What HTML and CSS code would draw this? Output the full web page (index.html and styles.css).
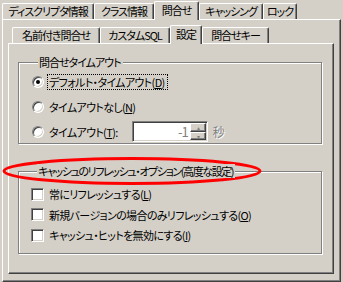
FILE: index.html
```html
<!DOCTYPE html>
<html lang="ja">
<head>
    <meta charset="UTF-8">
    <meta name="viewport" content="width=device-width, initial-scale=1.0">
    <title>問合せ設定</title>
    <link rel="stylesheet" href="styles.css">
</head>
<body>
    <div id="dlg">
        <div class="tabs">
            <span class="tab w92">ディスクリプタ情報</span>
            <span class="tab w60">クラス情報</span>
            <span class="tab sel w45">問合せ</span>
            <span class="tab w64">キャッシング</span>
            <span class="tab w34">ロック</span>
        </div>
        <div class="panel outer">
            <div class="tabs">
                <span class="tab w88">名前付き問合せ</span>
                <span class="tab w70">カスタムSQL</span>
                <span class="tab sel w32">設定</span>
                <span class="tab w67">問合せキー</span>
            </div>
            <div class="panel inner">
                <fieldset class="group g1">
                    <legend>問合せタイムアウト</legend>
                    <div class="row">
                        <span class="radio on"></span>
                        <span class="lbl focus">デフォルト・タイムアウト(<u>D</u>)</span>
                    </div>
                    <div class="row">
                        <span class="radio"></span>
                        <span class="lbl">タイムアウトなし(<u>N</u>)</span>
                    </div>
                    <div class="row">
                        <span class="radio"></span>
                        <span class="lbl">タイムアウト(<u>T</u>):</span>
                        <div class="spin">
                            <span class="field">-1</span>
                            <span class="btns">
                                <span class="sbtn">&#9652;</span>
                                <span class="sbtn">&#9662;</span>
                            </span>
                        </div>
                        <span class="lbl off">秒</span>
                    </div>
                </fieldset>
                <fieldset class="group g2">
                    <legend class="tight">キャッシュのリフレッシュ・オプション(高度な設定)</legend>
                    <div class="row chk">
                        <span class="box"></span>
                        <span class="lbl">常にリフレッシュする(<u>L</u>)</span>
                    </div>
                    <div class="row chk">
                        <span class="box"></span>
                        <span class="lbl">新規バージョンの場合のみリフレッシュする(<u>O</u>)</span>
                    </div>
                    <div class="row chk">
                        <span class="box"></span>
                        <span class="lbl">キャッシュ・ヒットを無効にする(<u>I</u>)</span>
                    </div>
                </fieldset>
            </div>
        </div>
        <!-- red mark drawn over the second group title -->
        <svg class="mark" width="262" height="30" viewBox="0 0 262 30">
            <ellipse cx="131" cy="15" rx="128" ry="12.5" fill="none" stroke="#ff0000" stroke-width="3"/>
        </svg>
    </div>
</body>
</html>
```

FILE: styles.css
```css
*{
    box-sizing: border-box;
    margin: 0px;
    padding: 0px;
}
body{
    background-color: #d4d0c8;
    font-family: "Noto Sans CJK JP", "Noto Sans", sans-serif;
    font-size: 11px;
    line-height: 14px;
    color: #000;
}
#dlg, legend, .lbl, .tab{
    font-feature-settings: "palt";
    letter-spacing: -1px;
}
#dlg{
    position: relative;
    width: 343px;
    height: 282px;
}
.tabs{
    display: flex;
    align-items: flex-end;
    height: 19px;
    padding-left: 2px;
}
.tab{
    position: relative;
    height: 16px;
    padding-top: 1px;
    border-top: 1px solid #fff;
    border-left: 1px solid #fff;
    border-right: 1px solid #404040;
    border-radius: 2px 2px 0px 0px;
    box-shadow: inset -1px 0px #808080;
    white-space: nowrap;
    line-height: 13px;
    text-align: center;
}
.tab.sel{
    height: 19px;
    margin-bottom: -1px;
    padding-top: 2px;
    background-color: #d4d0c8;
    z-index: 2;
}
.w92{ width: 92px; }
.w60{ width: 60px; }
.w45{ width: 45px; }
.w64{ width: 64px; }
.w34{ width: 34px; }
.w88{ width: 88px; }
.w70{ width: 70px; }
.w32{ width: 32px; }
.w67{ width: 67px; }
.panel{
    border-top: 1px solid #fff;
    border-left: 1px solid #fff;
    border-right: 1px solid #404040;
    border-bottom: 1px solid #404040;
    box-shadow: inset -1px -1px #808080;
}
.outer{
    margin-left: 2px;
    height: 263px;
    width: 339px;
    padding: 4px 6px 7px 5px;
    display: flex;
    flex-direction: column;
}
.outer > .tabs{
    padding-left: 4px;
}
.inner{
    flex: 1;
    padding: 11px 10px 0px 9px;
}
.group{
    border: 1px solid #808080;
    box-shadow: inset 1px 1px #fff, 1px 1px #fff;
    margin-right: 1px;
}
.group legend{
    margin-left: 6px;
    padding: 0px 2px 0px 1px;
    background-color: #d4d0c8;
    position: relative;
    z-index: 1;
    font-size: 11px;
}
.group legend.tight{
    letter-spacing: -1.4px;
}
.g1{
    height: 89px;
    padding: 0px 0px 0px 13px;
}
.g2{
    margin-top: 20px;
    height: 90px;
    padding: 6px 0px 0px 12px;
}
.row{
    display: flex;
    align-items: center;
    height: 25px;
}
.row.chk{
    height: 20.5px;
}
.lbl{
    white-space: nowrap;
    padding: 0px 2px 0px 1px;
    letter-spacing: -0.65px;
}
.lbl.focus{
    outline: 1px dotted #000;
    outline-offset: 0px;
}
.lbl.off{
    color: #808080;
    text-shadow: 1px 1px #fff;
    margin-left: 4px;
    letter-spacing: 0px;
    font-size: 12px;
}
.radio{
    width: 12px;
    height: 12px;
    margin-right: 4px;
    border-radius: 50%;
    border: 1px solid;
    border-color: #808080 #fff #fff #808080;
    box-shadow: inset 1px 1px #404040, inset -1px -1px #d4d0c8;
    background-color: #fff;
    display: flex;
    align-items: center;
    justify-content: center;
}
.radio.on::after{
    content: '';
    width: 4px;
    height: 4px;
    border-radius: 50%;
    background-color: #000;
}
.box{
    width: 13px;
    height: 13px;
    margin-right: 4px;
    border: 1px solid;
    border-color: #808080 #fff #fff #808080;
    box-shadow: inset 1px 1px #404040, inset -1px -1px #d4d0c8;
    background-color: #fff;
}
.spin{
    display: flex;
    width: 76px;
    height: 21px;
    margin-left: 12px;
    border: 1px solid;
    border-color: #808080 #fff #fff #808080;
    box-shadow: inset 1px 1px #404040, inset -1px -1px #d4d0c8;
    background-color: #fff;
    padding: 2px 2px 2px 2px;
}
.field{
    flex: 1;
    text-align: right;
    color: #808080;
    padding-right: 2px;
    font-size: 13px;
    line-height: 15px;
}
.btns{
    display: flex;
    flex-direction: column;
    width: 16px;
    margin: -1px -1px -1px 0px;
}
.sbtn{
    flex: 1;
    background-color: #d4d0c8;
    border-top: 1px solid #fff;
    border-left: 1px solid #fff;
    border-right: 1px solid #404040;
    border-bottom: 1px solid #404040;
    box-shadow: inset -1px -1px #808080;
    font-size: 6px;
    line-height: 7px;
    color: #808080;
    text-align: center;
    overflow: hidden;
}
.mark{
    position: absolute;
    left: 1px;
    top: 156px;
}
```
